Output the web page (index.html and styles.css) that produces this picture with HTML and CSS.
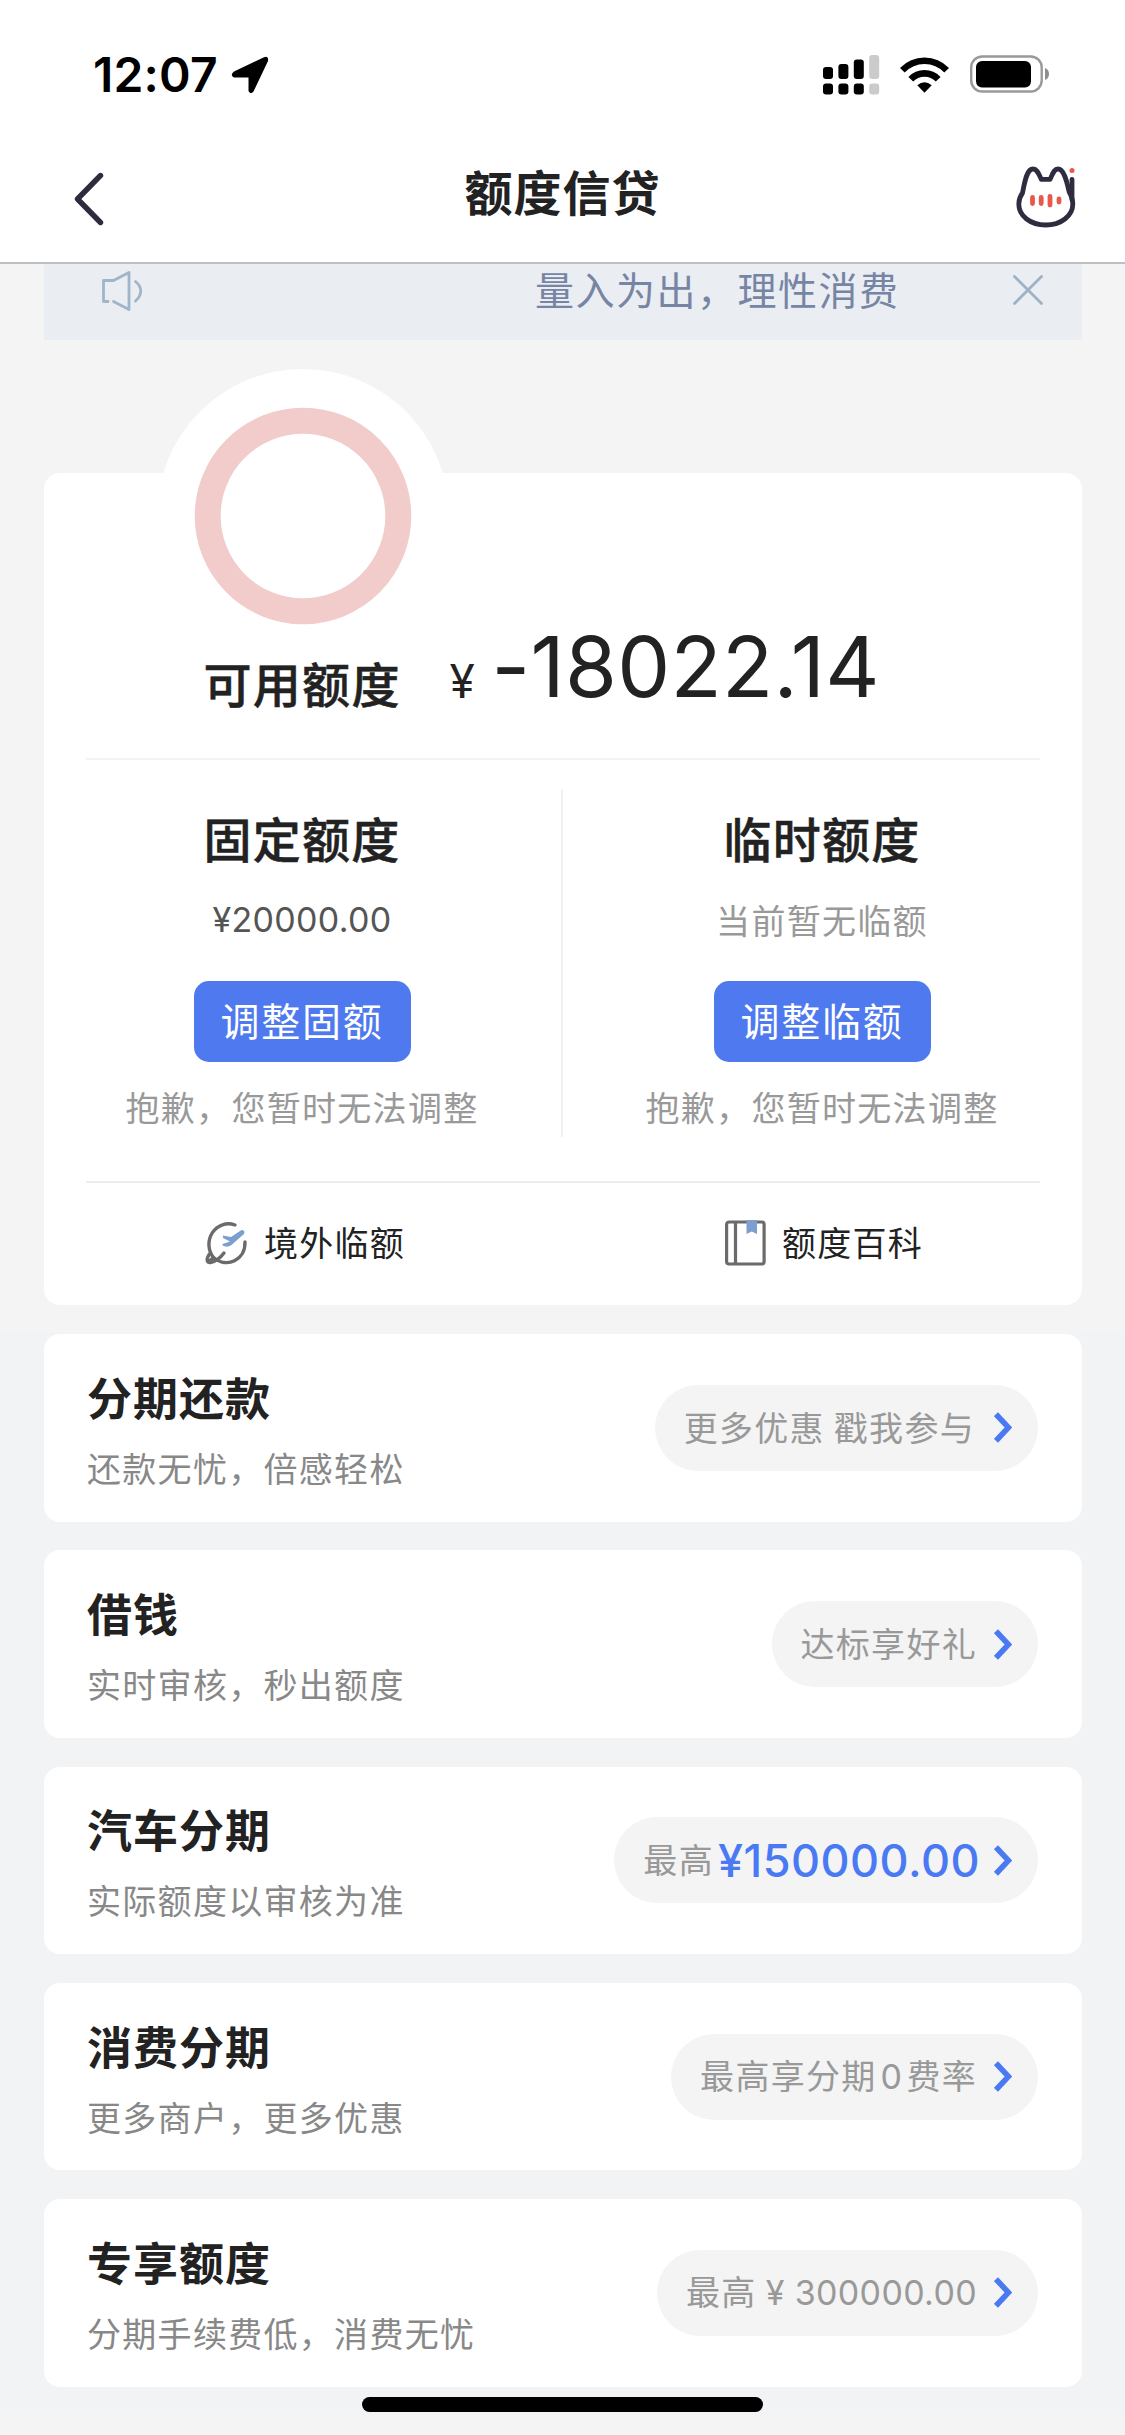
FILE: index.html
```html
<!DOCTYPE html>
<html lang="zh-CN">
<head>
<meta charset="utf-8">
<title>额度信贷</title>
<link rel="stylesheet" href="styles.css">
</head>
<body>
<div class="page">
  <header class="header">
    <div class="status">
      <span class="time">12:07</span>
      <svg class="locate" width="38" height="38" viewBox="0 0 38 38"><path d="M3 15.500 33 1.200Q38 -.5 37 5L22.500 35.500Q19.500 39 17.500 35V21.500H3Q-1.500 19 3 15.500Z"/></svg>
      <svg class="signal" width="57" height="40" viewBox="0 0 57 40">
        <g><rect x="0" y="12" width="10" height="12" rx="3"/><rect x="15.400" y="9" width="10" height="15" rx="3"/><rect x="30.800" y="4.500" width="10" height="19.500" rx="3"/>
        <rect x="0" y="28.500" width="10" height="11" rx="3"/><rect x="15.400" y="28.500" width="10" height="11" rx="3"/><rect x="30.800" y="28.500" width="10" height="11" rx="3"/></g>
        <g fill="#cbcbcb"><rect x="46.200" y="0" width="10" height="24" rx="3"/><rect x="46.200" y="28.500" width="10" height="11" rx="3"/></g>
      </svg>
      <svg class="wifi" width="49" height="36" viewBox="0 0 49 36"><g fill="none" stroke="#000" stroke-width="6.600"><path d="M2.300 13.300C14.500 .5 34.500 .5 46.700 13.300"/><path d="M10.800 22.200C18.300 14.400 30.700 14.400 38.200 22.200"/></g><path d="M24.500 35.700 17.300 28.200Q24.500 22.500 31.700 28.200Z"/></svg>
      <svg class="battery" width="79" height="38" viewBox="0 0 79 38"><rect x="1.200" y="1.500" width="70.500" height="35" rx="11" fill="none" stroke="#999" stroke-width="2.400"/><rect x="6" y="6" width="55" height="26.500" rx="6"/><path d="M75 13Q79 14.500 79 19T75 25Z" fill="#8e8e8e"/></svg>
    </div>
    <nav class="nav">
      <svg class="back" width="32" height="56" viewBox="0 0 32 56"><path d="M28.500 4.500 5.500 28 28.500 51.500" fill="none" stroke="#2e2b3e" stroke-width="5.400" stroke-linecap="round" stroke-linejoin="round"/></svg>
      <h1 class="title">额度信贷</h1>
      <svg class="cat" width="60" height="62" viewBox="0 0 60 62"><g fill="none" stroke="#2f2c40" stroke-width="4.800" stroke-linecap="round" stroke-linejoin="round"><path d="M52.800 24.500C50.500 14 47.500 3 42 3 37.500 3 36.500 9 34 13.300H25.300C23 9 21.500 3 17 3 10.500 3 8.500 17 6.500 27 3.500 31 2.800 34 2.800 38 2.800 50 14.500 59 29.700 59S56.800 50 56.800 38C56.800 34 55.500 30 53 25.500"/><path d="M56 13.500V34"/></g><circle cx="56" cy="4.500" r="2.500" fill="#e8594c"/><g stroke="#e8594c" stroke-width="4.800" stroke-linecap="round"><path d="M16.500 31.500V37.500M25.200 31.500V37.500M34 30.300V39M43 33V36"/></g></svg>
    </nav>
  </header>

  <main class="content">
    <section class="upper">
      <div class="notice">
        <svg class="speaker" width="42" height="42" viewBox="0 0 42 42"><g fill="none" stroke="#a1b5c9" stroke-width="2.800" stroke-linecap="round" stroke-linejoin="round"><path d="M7 31.500H2.500V10.500H12.500L28 2.500V39.500L12.500 31.500"/><path d="M34.500 11.500C41.500 17 41.500 25 34.500 31"/></g></svg>
        <span class="notice-text">量入为出，理性消费</span>
        <svg class="close" width="30" height="30" viewBox="0 0 30 30"><path d="M1.500 1.500 28.500 28.500M28.500 1.500 1.500 28.500" fill="none" stroke="#9db2c6" stroke-width="2.800" stroke-linecap="round"/></svg>
      </div>

      <section class="credit">
        <svg class="ring" width="292" height="262" viewBox="0 0 292 262"><circle cx="146" cy="146" r="146" fill="#fff"/><circle cx="146" cy="147" r="95.300" fill="none" stroke="#f1cccb" stroke-width="26"/></svg>
        <div class="available">
          <h2 class="heading">可用额度</h2>
          <span class="yen">¥</span><span class="amount">-18022.14</span>
        </div>
        <div class="limits">
          <div class="limit">
            <h2 class="heading">固定额度</h2>
            <p class="value value-num">¥20000.00</p>
            <button class="adjust">调整固额</button>
            <p class="hint">抱歉，您暂时无法调整</p>
          </div>
          <div class="limit">
            <h2 class="heading">临时额度</h2>
            <p class="value">当前暂无临额</p>
            <button class="adjust">调整临额</button>
            <p class="hint">抱歉，您暂时无法调整</p>
          </div>
        </div>
        <div class="links">
          <a class="link">
            <svg width="43" height="46" viewBox="0 0 43 46"><g fill="none" stroke="#6b6b6b" stroke-width="3.400" stroke-linecap="round" stroke-linejoin="round"><path d="M30 5A19.500 20.500 0 0 0 8.500 37.500C22 49 40.500 40 40 22"/><path d="M4.500 34C1 39 1.500 43 5.500 42.500 11 41.500 16 37 19 33M8.500 37.500 4.500 41"/></g><path d="M18 15.500 26 17 36.500 10Q40.500 10 39 14L26.500 25Q22 28 17.500 25.500V24L25 21.500 18 18Z" fill="#7c9fd0"/></svg>
            <span>境外临额</span>
          </a>
          <a class="link">
            <svg width="41" height="46" viewBox="0 0 41 46"><g fill="none" stroke="#6b6b6b" stroke-width="3.200"><rect x="1.600" y="2" width="37.500" height="42" rx="2.500"/><path d="M10.500 2V44"/></g><path d="M21.500 0H32V14L26.750 11.500 21.500 14Z" fill="#7c9fd0"/></svg>
            <span>额度百科</span>
          </a>
        </div>
      </section>
    </section>

    <section class="products">
      <article class="product">
        <div class="info"><h3>分期还款</h3><p>还款无忧，倍感轻松</p></div>
        <a class="pill"><span>更多优惠 戳我参与</span><svg class="chev chev-wide" width="18" height="31" viewBox="0 0 18 31"><path d="M2 2.200 14.500 15.500 2 28.800" fill="none" stroke="#4a7af3" stroke-width="5.600"/></svg></a>
      </article>
      <article class="product">
        <div class="info"><h3>借钱</h3><p>实时审核，秒出额度</p></div>
        <a class="pill"><span>达标享好礼</span><svg class="chev" width="18" height="31" viewBox="0 0 18 31"><path d="M2 2.200 14.500 15.500 2 28.800" fill="none" stroke="#4a7af3" stroke-width="5.600"/></svg></a>
      </article>
      <article class="product">
        <div class="info"><h3>汽车分期</h3><p>实际额度以审核为准</p></div>
        <a class="pill"><span>最高</span><b class="big">¥150000.00</b><svg class="chev" width="18" height="31" viewBox="0 0 18 31"><path d="M2 2.200 14.500 15.500 2 28.800" fill="none" stroke="#4a7af3" stroke-width="5.600"/></svg></a>
      </article>
      <article class="product">
        <div class="info"><h3>消费分期</h3><p>更多商户，更多优惠</p></div>
        <a class="pill"><span>最高享分期<i class="num zero">0</i>费率</span><svg class="chev" width="18" height="31" viewBox="0 0 18 31"><path d="M2 2.200 14.500 15.500 2 28.800" fill="none" stroke="#4a7af3" stroke-width="5.600"/></svg></a>
      </article>
      <article class="product">
        <div class="info"><h3>专享额度</h3><p>分期手续费低，消费无忧</p></div>
        <a class="pill"><span>最高<i class="num sum">¥ 300000.00</i></span><svg class="chev" width="18" height="31" viewBox="0 0 18 31"><path d="M2 2.200 14.500 15.500 2 28.800" fill="none" stroke="#4a7af3" stroke-width="5.600"/></svg></a>
      </article>
      <div class="home-bar"></div>
    </section>
  </main>
</div>
</body>
</html>
```
FILE: styles.css
```css
* { box-sizing: border-box; margin: 0; padding: 0; }
body {
  background: #f4f4f4;
  color: #222;
  font-family: "Noto Sans CJK SC", sans-serif;
  letter-spacing: 1.3px;
}
svg { display: block; flex: none; }
h1, h2, h3 { font-weight: 500; }
i { font-style: normal; }
.page { width: 1125px; height: 2435px; overflow: hidden; }

.header { height: 264px; background: #fff; border-bottom: 2px solid #bcc0c3; }
.status { display: flex; align-items: flex-start; height: 128px; padding: 55px 76px 0 93px; }
.time { width: 138px; font: 600 48px/40px Inter, sans-serif; letter-spacing: .2px; color: #000; }
.locate { margin-top: 1px; }
.signal { margin-left: auto; }
.wifi { margin: 2px 0 0 20px; }
.battery { margin-left: 21px; }
.nav { display: flex; justify-content: space-between; height: 134px; padding: 0 49px 0 72px; }
.back { margin-top: 43px; }
.title { padding-left: 5px; font-size: 48px; line-height: 60px; margin-top: 32px; letter-spacing: 1px; font-weight: 700; }
.cat { margin-top: 38px; }

.upper { height: 1069px; padding: 0 43.500px; }
.notice { display: flex; align-items: flex-start; height: 76px; padding: 6px 39px 0 57px; background: #eaedf2; }
.notice-text { margin: -2px 0 0 auto; font-size: 39px; line-height: 40px; letter-spacing: 1.500px; color: #7785a5; }
.close { margin: 5px 0 0 113px; }

.credit { display: flow-root; height: 832px; margin-top: 133px; border-radius: 16px; background: #fff; }
.ring { margin: -104px 0 0 113.500px; }
.available { display: flex; height: 129px; margin: 0 42px; padding-left: 118px; border-bottom: 2px solid #f3f3f3; }
.heading { font-size: 48px; line-height: 60px; letter-spacing: 1.300px; -webkit-text-stroke: .5px currentColor; }
.available .heading { margin-top: 21px; width: 246px; }
.yen { width: 42px; margin-top: 15px; font: 400 46px/70px Inter, sans-serif; letter-spacing: 0; }
.amount { margin-top: 1px; font: 400 84px/70px Inter, sans-serif; letter-spacing: .3px; }

.limits { display: grid; grid-template-columns: 1fr 1fr; height: 423px; margin: 0 42px; padding: 29px 0 44px; border-bottom: 2px solid #ececec; }
.limit { display: flex; flex-direction: column; align-items: center; padding-top: 18px; }
.limit:first-child { margin-left: -42px; border-right: 2px solid #f1f1f1; }
.limit:last-child { margin-right: -42px; }
.value { margin-top: 31px; font-size: 34px; line-height: 44px; color: #999; }
.value-num { font-family: Inter, sans-serif; color: #555; letter-spacing: .3px; }
.adjust { width: 217px; height: 81px; margin-top: 39px; padding-bottom: 4px; border: 0; border-radius: 15px; background: #4f79ee; color: #fff; font: 400 39px/75px "Noto Sans CJK SC", sans-serif; letter-spacing: 1.800px; }
.hint { margin-top: 22px; font-size: 34px; line-height: 46px; color: #999; }

.links { display: grid; grid-template-columns: 1fr 1fr; padding-top: 37px; }
.link { display: flex; align-items: center; justify-content: center; gap: 16px; height: 46px; padding-left: 4px; font-size: 34px; line-height: 44px; color: #222; }
.link span { margin-top: -2px; }

.products { display: flex; flex-direction: column; gap: 28.700px; height: 1082px; padding: 1px 43.500px 0; background: #f2f3f5; }
.product { display: flex; flex: none; justify-content: space-between; align-items: center; height: 187.600px; padding: 0 43.500px; border-radius: 16px; background: #fff; }
.info { padding-top: 3px; }
.info h3 { font-size: 45px; line-height: 56px; letter-spacing: 1px; font-weight: 700; }
.info p { margin-top: 21px; font-size: 34px; line-height: 44px; color: #888; }
.pill { display: flex; align-items: center; height: 86px; padding: 0 26px 0 29px; border-radius: 43px; background: #f4f4f4; color: #999; font-size: 34px; line-height: 44px; }
.pill span { margin-top: -2px; }
.chev { margin-left: 17px; }
.chev-wide { margin-left: 19px; }
.num { font-family: Inter, sans-serif; letter-spacing: .35px; }
.zero { padding: 0 4px; }
.sum { padding-left: 9px; }
.big { margin: 1px -3px 0 4px; font: 500 45px/50px Inter, sans-serif; letter-spacing: .5px; color: #4a7af3; }
.home-bar { flex: none; align-self: center; width: 401px; height: 15px; margin-top: -18px; border-radius: 8px; background: #000; }
```
